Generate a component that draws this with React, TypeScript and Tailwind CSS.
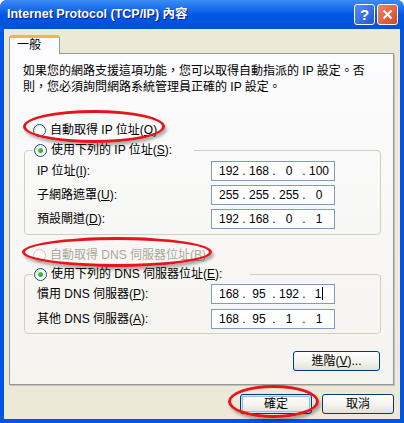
import React from "react";

const FONT = { fontFamily: '"Liberation Sans", "Noto Sans CJK TC", sans-serif' };

function Radio({ checked = false, disabled = false }: { checked?: boolean; disabled?: boolean }) {
  return (
    <span
      className={
        "w-[13px] h-[13px] rounded-full border flex items-center justify-center shrink-0 " +
        (disabled
          ? "border-[#CAC8BB] bg-white"
          : "border-[#1C5180] bg-gradient-to-br from-[#DCDCD7] via-white to-white")
      }
    >
      {checked && (
        <span className="w-[5px] h-[5px] rounded-full bg-gradient-to-br from-[#55D551] to-[#21A121]" />
      )}
    </span>
  );
}

function Key({ k }: { k: string }) {
  return (
    <>
      (<span className="underline underline-offset-[1px]">{k}</span>)
    </>
  );
}

function IpBox({ parts, cursor = false }: { parts: string[]; cursor?: boolean }) {
  return (
    <div className="w-[124px] h-[20px] border border-[#7F9DB9] bg-white flex items-center pl-[5px] text-[12px] text-black">
      {parts.map((p, i) => (
        <React.Fragment key={i}>
          <span className="w-[24px] text-center relative">
            {p}
            {cursor && i === 3 && (
              <span className="inline-block w-px h-[13px] bg-black align-[-2px] ml-px" />
            )}
          </span>
          {i < 3 && <span className="w-[6px] text-center">.</span>}
        </React.Fragment>
      ))}
    </div>
  );
}

function Row({ label, parts, cursor }: { label: React.ReactNode; parts: string[]; cursor?: boolean }) {
  return (
    <div className="flex items-center pl-[4px] h-[20px]">
      <span className="w-[174px] text-[12px]">{label}</span>
      <IpBox parts={parts} cursor={cursor} />
    </div>
  );
}

function XpButton({ children, isDefault = false, w }: { children: React.ReactNode; isDefault?: boolean; w: string }) {
  return (
    <button
      className={
        w +
        " h-[20px] rounded-[3px] border border-[#003C74] bg-gradient-to-b from-white via-[#F5F4EF] to-[#E3E1D6] text-[12px] text-black flex items-center justify-center " +
        (isDefault ? "shadow-[inset_0_0_0_1px_#CEE7FF,inset_0_0_0_2px_#98B8EA]" : "")
      }
    >
      {children}
    </button>
  );
}

export default function App() {
  return (
    <div className="w-[404px] h-[423px] relative bg-[#0055E5] rounded-t-[7px] flex flex-col" style={FONT}>
      {/* title bar */}
      <div className="h-[29px] flex items-center pl-[7px] pr-[6px] rounded-t-[7px] bg-gradient-to-b from-[#3B8CF5] via-[#0058E6] to-[#0250D8]">
        <span className="text-white font-bold text-[12.5px] [text-shadow:1px_1px_#0A1883] whitespace-nowrap">
          Internet Protocol (TCP/IP) 內容
        </span>
        <div className="ml-auto flex gap-[2px]">
          <div className="w-[21px] h-[21px] rounded-[3px] border border-white bg-gradient-to-br from-[#5A8CF5] to-[#1F55D8] flex items-center justify-center text-white font-bold text-[15px] leading-none">
            ?
          </div>
          <div className="w-[21px] h-[21px] rounded-[3px] border border-white bg-gradient-to-br from-[#F0866A] to-[#D1441C] flex items-center justify-center">
            <svg width="11" height="11" viewBox="0 0 11 11">
              <path d="M1.5 1.5 L9.5 9.5 M9.5 1.5 L1.5 9.5" stroke="white" strokeWidth="2" />
            </svg>
          </div>
        </div>
      </div>

      {/* body */}
      <div className="flex-1 mx-[4px] mb-[4px] bg-[#ECE9D8] pl-[5px] pt-[6px] flex flex-col">
        <div className="w-[51px] h-[19px] -mb-px relative z-10 bg-[#FCFCFE] border-x border-[#919B9C] rounded-t-[3px] border-t-[3px] border-t-[#F5B43C] pl-[7px] text-[12px] leading-[15px]">
          一般
        </div>
        <div className="w-[385px] h-[332px] border border-[#919B9C] bg-gradient-to-b from-[#FCFCFE] to-[#F4F3EE] shadow-[1px_1px_0_#C5C2B2] flex flex-col text-black">
          <p className="mt-[9px] ml-[13px] text-[12px] leading-[16px] whitespace-nowrap">
            如果您的網路支援這項功能，您可以取得自動指派的 IP 設定。否
            <br />
            則，您必須詢問網路系統管理員正確的 IP 設定。
          </p>

          <div className="mt-[27px] ml-[23px] h-4 flex items-center gap-[4px] text-[12px]">
            <Radio />
            <span>
              自動取得 IP 位址<Key k="O" />
            </span>
          </div>

          <fieldset className="mt-[4px] ml-[14px] w-[357px] border border-[#D0D0BF] rounded-[4px] pl-[8px] pt-[3px] pb-[5px] flex flex-col gap-[4px]">
            <legend className="h-4 pl-px pr-[22px] flex items-center gap-[4px] text-[12px]">
              <Radio checked />
              <span>
                使用下列的 IP 位址<Key k="S" />:
              </span>
            </legend>
            <Row label={<>IP 位址<Key k="I" />:</>} parts={["192", "168", "0", "100"]} />
            <Row label={<>子網路遮罩<Key k="U" />:</>} parts={["255", "255", "255", "0"]} />
            <Row label={<>預設閘道<Key k="D" />:</>} parts={["192", "168", "0", "1"]} />
          </fieldset>

          <div className="mt-[12px] ml-[23px] h-4 flex items-center gap-[4px] text-[12px] text-[#ACA899]">
            <Radio disabled />
            <span>
              自動取得 DNS 伺服器位址<Key k="B" />
            </span>
          </div>

          <fieldset className="mt-[3px] ml-[14px] w-[357px] border border-[#D0D0BF] rounded-[4px] pl-[8px] pt-[2px] pb-[4px] flex flex-col gap-[5px]">
            <legend className="h-4 pl-px pr-[28px] flex items-center gap-[4px] text-[12px]">
              <Radio checked />
              <span>
                使用下列的 DNS 伺服器位址<Key k="E" />:
              </span>
            </legend>
            <Row label={<>慣用 DNS 伺服器<Key k="P" />:</>} parts={["168", "95", "192", "1"]} cursor />
            <Row label={<>其他 DNS 伺服器<Key k="A" />:</>} parts={["168", "95", "1", "1"]} />
          </fieldset>

          <div className="mt-[17px] mr-[13px] self-end">
            <XpButton w="w-[87px]">
              進階<Key k="V" />...
            </XpButton>
          </div>
        </div>

        <div className="mt-[9px] pr-[6px] flex justify-end gap-[10px]">
          <XpButton w="w-[72px]" isDefault>
            確定
          </XpButton>
          <XpButton w="w-[72px]">取消</XpButton>
        </div>
      </div>

      {/* red highlight ellipses */}
      <div className="absolute left-[23px] top-[110px] w-[142px] h-[33px] rounded-[50%] border-[3px] border-[#E8141B] shadow-[2px_3px_3px_rgba(0,0,0,0.3)] pointer-events-none" />
      <div className="absolute left-[22px] top-[237px] w-[190px] h-[30px] rounded-[50%] border-[3px] border-[#E8141B] shadow-[2px_3px_3px_rgba(0,0,0,0.3)] pointer-events-none" />
      <div className="absolute left-[228px] top-[385px] w-[91px] h-[33px] rounded-[50%] border-[3px] border-[#E8141B] shadow-[2px_3px_3px_rgba(0,0,0,0.3)] pointer-events-none" />
    </div>
  );
}
